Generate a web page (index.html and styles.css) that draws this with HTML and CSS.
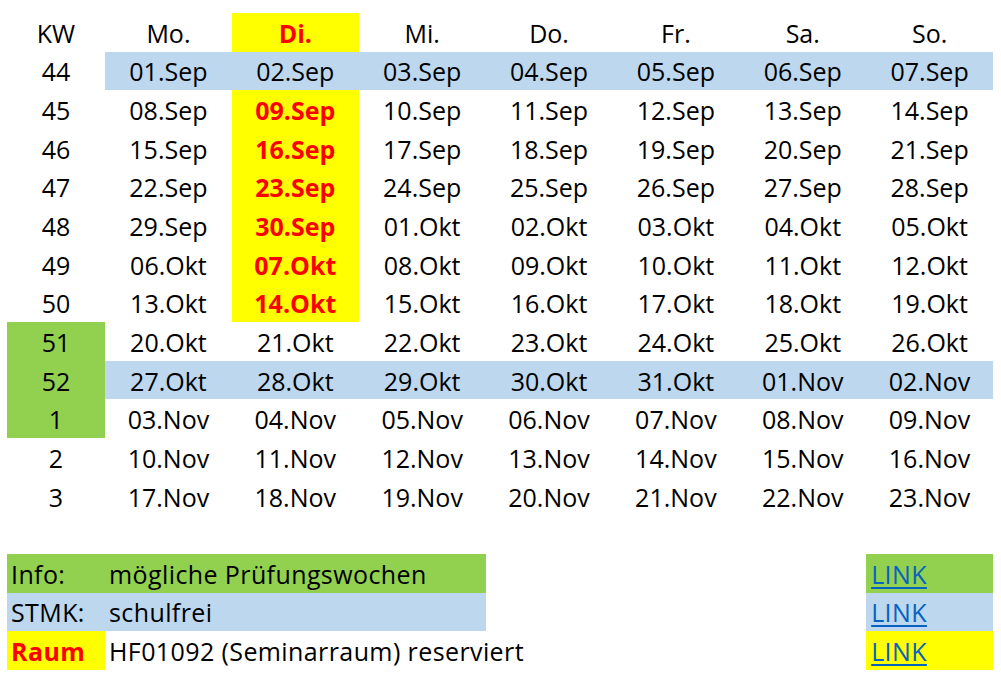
FILE: index.html
```html
<!DOCTYPE html>
<html lang="de">
<head>
<meta charset="utf-8">
<link rel="stylesheet" href="styles.css">
</head>
<body>
<div class="sheet">
  <div class="cal">
    <div class="c">KW</div><div class="c">Mo.</div><div class="c di">Di.</div><div class="c">Mi.</div><div class="c">Do.</div><div class="c">Fr.</div><div class="c">Sa.</div><div class="c">So.</div>

    <div class="c">44</div><div class="c b">01.Sep</div><div class="c b">02.Sep</div><div class="c b">03.Sep</div><div class="c b">04.Sep</div><div class="c b">05.Sep</div><div class="c b">06.Sep</div><div class="c b">07.Sep</div>

    <div class="c">45</div><div class="c">08.Sep</div><div class="c di">09.Sep</div><div class="c">10.Sep</div><div class="c">11.Sep</div><div class="c">12.Sep</div><div class="c">13.Sep</div><div class="c">14.Sep</div>

    <div class="c">46</div><div class="c">15.Sep</div><div class="c di">16.Sep</div><div class="c">17.Sep</div><div class="c">18.Sep</div><div class="c">19.Sep</div><div class="c">20.Sep</div><div class="c">21.Sep</div>

    <div class="c">47</div><div class="c">22.Sep</div><div class="c di">23.Sep</div><div class="c">24.Sep</div><div class="c">25.Sep</div><div class="c">26.Sep</div><div class="c">27.Sep</div><div class="c">28.Sep</div>

    <div class="c">48</div><div class="c">29.Sep</div><div class="c di">30.Sep</div><div class="c">01.Okt</div><div class="c">02.Okt</div><div class="c">03.Okt</div><div class="c">04.Okt</div><div class="c">05.Okt</div>

    <div class="c">49</div><div class="c">06.Okt</div><div class="c di">07.Okt</div><div class="c">08.Okt</div><div class="c">09.Okt</div><div class="c">10.Okt</div><div class="c">11.Okt</div><div class="c">12.Okt</div>

    <div class="c">50</div><div class="c">13.Okt</div><div class="c di">14.Okt</div><div class="c">15.Okt</div><div class="c">16.Okt</div><div class="c">17.Okt</div><div class="c">18.Okt</div><div class="c">19.Okt</div>

    <div class="c g">51</div><div class="c">20.Okt</div><div class="c">21.Okt</div><div class="c">22.Okt</div><div class="c">23.Okt</div><div class="c">24.Okt</div><div class="c">25.Okt</div><div class="c">26.Okt</div>

    <div class="c g">52</div><div class="c b">27.Okt</div><div class="c b">28.Okt</div><div class="c b">29.Okt</div><div class="c b">30.Okt</div><div class="c b">31.Okt</div><div class="c b">01.Nov</div><div class="c b">02.Nov</div>

    <div class="c g">1</div><div class="c">03.Nov</div><div class="c">04.Nov</div><div class="c">05.Nov</div><div class="c">06.Nov</div><div class="c">07.Nov</div><div class="c">08.Nov</div><div class="c">09.Nov</div>

    <div class="c">2</div><div class="c">10.Nov</div><div class="c">11.Nov</div><div class="c">12.Nov</div><div class="c">13.Nov</div><div class="c">14.Nov</div><div class="c">15.Nov</div><div class="c">16.Nov</div>

    <div class="c">3</div><div class="c">17.Nov</div><div class="c">18.Nov</div><div class="c">19.Nov</div><div class="c">20.Nov</div><div class="c">21.Nov</div><div class="c">22.Nov</div><div class="c">23.Nov</div>
  </div>

  <div class="legend">
    <div class="l g">Info:</div><div class="l g wide">mögliche Prüfungswochen</div><div class="l g link-cell"><a href="#" class="link">LINK</a></div>
    <div class="l b">STMK:</div><div class="l b wide">schulfrei</div><div class="l b link-cell"><a href="#" class="link">LINK</a></div>
    <div class="l y raum">Raum</div><div class="l wide">HF01092 (Seminarraum) reserviert</div><div class="l y link-cell"><a href="#" class="link">LINK</a></div>
  </div>
</div>
</body>
</html>
```

FILE: styles.css
```css
html, body {
  margin: 0;
  padding: 0;
  background: #ffffff;
}

body {
  font-family: "Open Sans", "Noto Sans", sans-serif;
  font-size: 25px;
  color: #000000;
}

.sheet {
  padding: 13px 0 0 7px;
}

.cal,
.legend {
  display: grid;
  grid-template-columns: 98px repeat(7, 126.86px);
  grid-auto-rows: 38.65px;
}

.legend {
  margin-top: 38.65px;
}

.c {
  display: flex;
  align-items: center;
  justify-content: center;
  white-space: nowrap;
  padding-top: 1px;
}

.l {
  display: flex;
  align-items: center;
  padding-left: 4px;
  white-space: nowrap;
  letter-spacing: 0.4px;
  padding-top: 1px;
}

.wide {
  grid-column: span 3;
}

.link-cell {
  grid-column: 8;
  padding-left: 5px;
}

.b { background: #bdd7ee; }
.g { background: #92d050; }
.y { background: #ffff00; }

.di {
  background: #ffff00;
  color: #ff0000;
  font-weight: 700;
}

.raum {
  color: #ff0000;
  font-weight: 700;
}

.link {
  color: #0563c1;
  text-decoration: underline;
  text-decoration-thickness: 2px;
  text-underline-offset: 3px;
}
```
